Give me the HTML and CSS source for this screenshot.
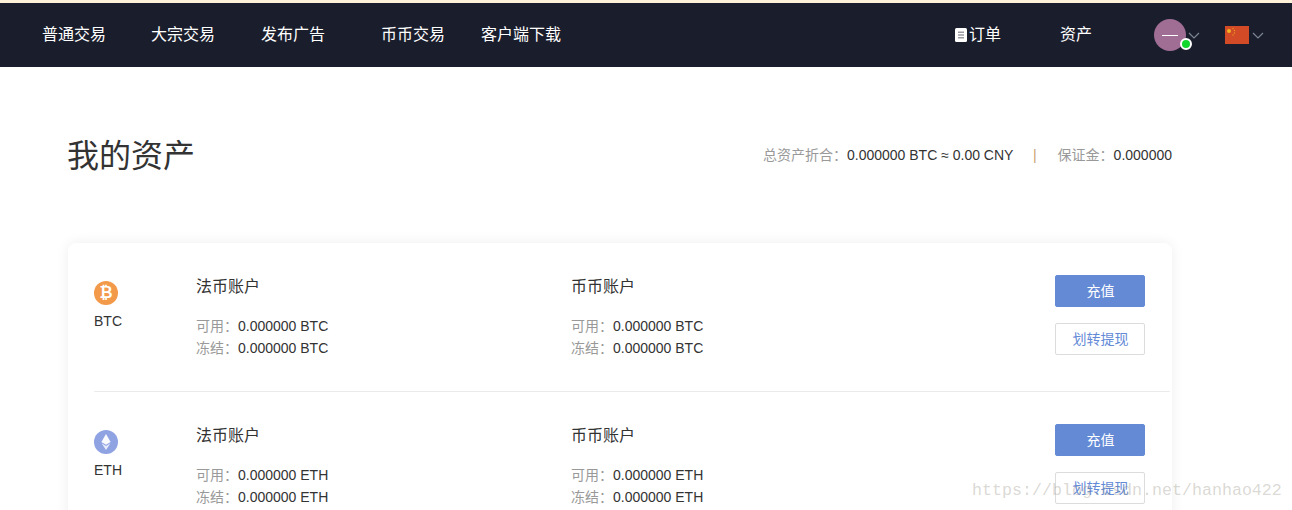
FILE: index.html
```html
<!DOCTYPE html>
<html lang="zh-CN">
<head>
    <meta charset="UTF-8">
    <title>我的资产</title>
    <link rel="stylesheet" href="styles.css">
</head>
<body>
    <header class="topbar">
        <nav class="nav-left">
            <a class="nav-link">普通交易</a>
            <a class="nav-link nav-link-second">大宗交易</a>
            <a class="nav-link">发布广告</a>
            <a class="nav-link nav-link-wide">币币交易</a>
            <a class="nav-link nav-link-narrow">客户端下载</a>
        </nav>
        <div class="nav-right">
            <a class="nav-link nav-order">
                <svg class="order-icon" width="12" height="14" viewBox="0 0 12 14"><rect width="12" height="14" rx="1.5" fill="#fff"/><path d="M3 3.500h6v1.500H3zM3 6.200h6v1.500H3zM3 8.900h6v1.500H3z" fill="#9a9aa4"/></svg>订单
            </a>
            <a class="nav-link nav-assets">资产</a>
            <div class="avatar">
                <span class="avatar-dash"></span>
                <span class="avatar-status"></span>
            </div>
            <svg class="chevron chevron-user" width="12" height="7" viewBox="0 0 12 7"><path d="M1 1l5 5 5-5" fill="none" stroke="#7d8794" stroke-width="1.2"/></svg>
            <svg class="flag" width="24" height="18" viewBox="0 0 24 18">
                <rect width="24" height="18" fill="#d24b26"/>
                <circle cx="4" cy="5" r="2" fill="#f0b323"/>
                <circle cx="8" cy="2.500" r=".7" fill="#e89a23"/>
                <circle cx="9.500" cy="4.500" r=".7" fill="#e89a23"/>
                <circle cx="9.500" cy="7" r=".7" fill="#e89a23"/>
                <circle cx="8" cy="9" r=".7" fill="#e89a23"/>
            </svg>
            <svg class="chevron" width="12" height="7" viewBox="0 0 12 7"><path d="M1 1l5 5 5-5" fill="none" stroke="#7d8794" stroke-width="1.2"/></svg>
        </div>
    </header>

    <main class="page">
        <div class="page-head">
            <h1>我的资产</h1>
            <div class="summary">
                <span class="muted">总资产折合：</span>0.000000 BTC ≈ 0.00 CNY
                <span class="summary-sep">|</span>
                <span class="muted">保证金：</span>0.000000
            </div>
        </div>

        <section class="card">
            <div class="coin-row">
                <div class="coin">
                    <svg class="coin-icon" width="24" height="24" viewBox="0 0 24 24">
                        <circle cx="12" cy="12" r="12" fill="#f2994a"/>
                        <text class="coin-glyph" x="12" y="17" text-anchor="middle">₿</text>
                    </svg>
                    <div class="coin-name">BTC</div>
                </div>
                <div class="account">
                    <h3>法币账户</h3>
                    <p><span class="muted">可用：</span>0.000000 BTC</p>
                    <p><span class="muted">冻结：</span>0.000000 BTC</p>
                </div>
                <div class="account">
                    <h3>币币账户</h3>
                    <p><span class="muted">可用：</span>0.000000 BTC</p>
                    <p><span class="muted">冻结：</span>0.000000 BTC</p>
                </div>
                <div class="actions">
                    <a class="btn btn-primary">充值</a>
                    <a class="btn btn-outline">划转提现</a>
                </div>
            </div>
            <div class="coin-row">
                <div class="coin">
                    <svg class="coin-icon" width="24" height="24" viewBox="0 0 24 24">
                        <circle cx="12" cy="12" r="12" fill="#8fa3e3"/>
                        <path d="M12 4l4.600 8-4.600 2.700L7.400 12z" fill="#fff" opacity=".95"/>
                        <path d="M7.600 13.300L12 16l4.400-2.700L12 20z" fill="#fff" opacity=".8"/>
                    </svg>
                    <div class="coin-name">ETH</div>
                </div>
                <div class="account">
                    <h3>法币账户</h3>
                    <p><span class="muted">可用：</span>0.000000 ETH</p>
                    <p><span class="muted">冻结：</span>0.000000 ETH</p>
                </div>
                <div class="account">
                    <h3>币币账户</h3>
                    <p><span class="muted">可用：</span>0.000000 ETH</p>
                    <p><span class="muted">冻结：</span>0.000000 ETH</p>
                </div>
                <div class="actions">
                    <a class="btn btn-primary">充值</a>
                    <a class="btn btn-outline">划转提现</a>
                </div>
            </div>
        </section>
    </main>

    <div class="watermark">https://blog.csdn.net/hanhao422</div>
</body>
</html>
```

FILE: styles.css
```css
html, body {
    margin: 0;
    height: 510px;
    overflow: hidden;
}
body {
    position: relative;
    font-family: "Liberation Sans", "Noto Sans CJK SC", sans-serif;
    font-size: 14px;
    color: #333;
    background: #fff;
}
.topbar {
    display: flex;
    justify-content: space-between;
    align-items: center;
    height: 64px;
    border-top: 3px solid #fdf1da;
    background: #1a1d2c;
}
.nav-left {
    display: flex;
    padding-left: 42px;
}
.nav-link {
    color: #fff;
    font-size: 16px;
    line-height: 22px;
    margin-right: 45px;
}
.nav-link-second { margin-right: 46px; }
.nav-link-wide { margin-left: 11px; margin-right: 36px; }
.nav-link-narrow { margin-right: 0; }
.nav-right {
    display: flex;
    align-items: center;
    padding-right: 28px;
}
.nav-order {
    display: flex;
    align-items: center;
    margin-right: 59px;
}
.order-icon { margin-right: 2px; }
.nav-assets { margin-right: 62px; }
.avatar {
    position: relative;
    width: 32px;
    height: 32px;
    border-radius: 50%;
    background: #a06d95;
    display: flex;
    align-items: center;
    justify-content: center;
}
.avatar-dash {
    width: 16px;
    height: 1px;
    background: #fff;
}
.avatar-status {
    position: absolute;
    right: -6px;
    bottom: 1px;
    width: 8px;
    height: 8px;
    border: 2px solid #fff;
    border-radius: 50%;
    background: #11d62c;
}
.chevron-user { margin-left: 2px; margin-right: 25px; }
.flag { margin-right: 3px; }

.page { padding: 0 120px 0 68px; }
.page-head {
    display: flex;
    justify-content: space-between;
    align-items: center;
    box-sizing: border-box;
    height: 176px;
    padding-bottom: 2px;
}
h1 {
    margin: 0 0 2px -1px;
    font-size: 32px;
    font-weight: 400;
    color: #333;
}
.summary { font-size: 14px; }
.muted { color: #999; }
.summary-sep {
    color: #c9a071;
    margin: 0 17px 0 16px;
}
.card {
    width: 1104px;
    border-radius: 8px;
    background: #fff;
    box-shadow: 0 0 14px rgba(0, 0, 0, .07);
    padding-left: 26px;
    box-sizing: border-box;
}
.coin-row {
    display: flex;
    margin-right: 2px;
    padding-top: 32px;
    box-sizing: border-box;
    border-bottom: 1px solid #ebebeb;
    height: 149px;
}
.coin { width: 102px; padding-top: 6px; }
.coin-icon { display: block; }
.coin-glyph { font-size: 16px; font-weight: 700; fill: #fff; }
.coin-name { margin-top: 8px; line-height: 16px; }
.account { width: 375px; }
.account h3 {
    margin: 0 0 16px;
    font-size: 16px;
    font-weight: 400;
    line-height: 24px;
}
.account p {
    margin: 0;
    line-height: 22px;
}
.actions {
    display: flex;
    flex-direction: column;
    gap: 16px;
    margin-left: auto;
    margin-right: 25px;
    width: 90px;
}
.btn {
    display: block;
    box-sizing: border-box;
    height: 32px;
    line-height: 30px;
    padding-left: 1px;
    text-align: center;
    border-radius: 2px;
    font-size: 14px;
    border: 1px solid #648ad6;
}
.btn-primary { background: #648ad6; color: #fff; }
.btn-outline { border-color: #dcdcdc; color: #648ad6; background: #fff; }

.watermark {
    position: absolute;
    left: 972px;
    top: 481px;
    font-family: "Liberation Mono", monospace;
    font-size: 16.67px;
    line-height: 20px;
    color: rgba(130, 125, 110, .3);
}
```
